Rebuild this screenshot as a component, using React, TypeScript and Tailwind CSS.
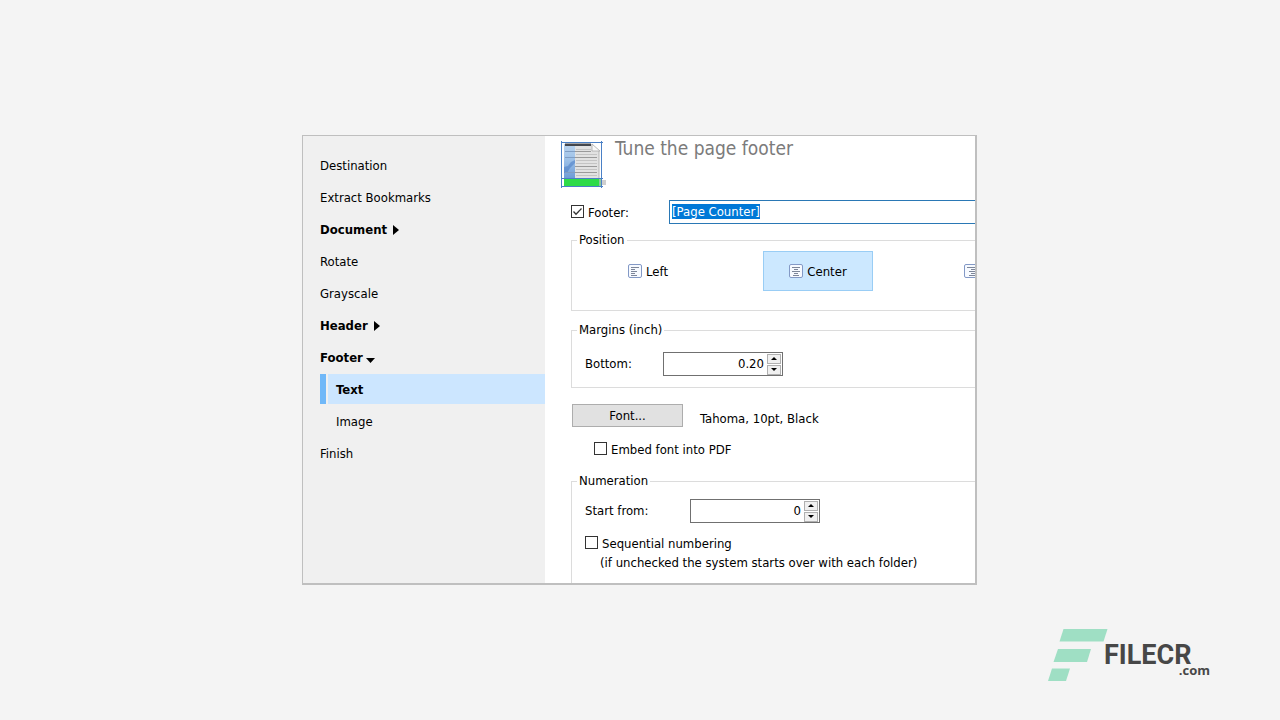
import { useEffect, useRef, useState } from "react";

type NavItem = {
  label: string;
  group?: "closed" | "open";
  child?: boolean;
  selected?: boolean;
};

const NAV: NavItem[] = [
  { label: "Destination" },
  { label: "Extract Bookmarks" },
  { label: "Document", group: "closed" },
  { label: "Rotate" },
  { label: "Grayscale" },
  { label: "Header", group: "closed" },
  { label: "Footer", group: "open" },
  { label: "Text", child: true, selected: true },
  { label: "Image", child: true },
  { label: "Finish" },
];

function GroupArrow({ open }: { open: boolean }) {
  return open ? (
    <svg className="mt-1 ml-[3px] h-[5px] w-[9px]" viewBox="0 0 9 5" aria-hidden="true">
      <path d="M0 0h9L4.5 5z" fill="#000" />
    </svg>
  ) : (
    <svg className="ml-[6px] h-[10px] w-[6px]" viewBox="0 0 6 10" aria-hidden="true">
      <path d="M0 0v10l6-5z" fill="#000" />
    </svg>
  );
}

function NavRow({ item }: { item: NavItem }) {
  const weight = item.group || item.selected ? "font-bold" : "font-normal";
  return (
    <li className="flex h-[30px]">
      {item.selected && <span className="mr-[2px] w-[6px] shrink-0 bg-[#70b8f8]" />}
      <a
        href="#"
        aria-current={item.selected ? "page" : undefined}
        className={`flex flex-1 items-center pt-[2px] ${weight} ${
          item.selected ? "bg-[#cce6ff] pl-2" : item.child ? "pl-4" : ""
        }`}
      >
        {item.label}
        {item.group && <GroupArrow open={item.group === "open"} />}
      </a>
    </li>
  );
}

function PageIcon() {
  return (
    <svg className="mt-1 h-12 w-12 shrink-0" viewBox="0 0 48 48" aria-hidden="true">
      <defs>
        <linearGradient id="page-blue" x1="0" y1="0" x2="0" y2="1">
          <stop offset="0" stopColor="#b9d3ee" />
          <stop offset=".45" stopColor="#9dc1e8" />
          <stop offset="1" stopColor="#6c9ad6" />
        </linearGradient>
      </defs>
      <path d="M3 3h28l7 7v28H3z" fill="#e2e2e2" />
      <path d="M3 3h11v35H3z" fill="url(#page-blue)" />
      <path d="M3 26l4-1 3-4 4-2v3l-5 5-3 5H3z" fill="#4a7cc4" opacity=".55" />
      <path d="M38 10v28" stroke="#b4b4b4" />
      <path d="M31 3v7h8z" fill="#fafafa" stroke="#a8a8a8" strokeWidth=".8" />
      <path
        d="M15 8.500h15M15 13.500h21M15 19.500h21M15 22.500h21M15 28.500h21M15 34.500h21"
        stroke="#c4c4c4"
      />
      <path d="M14 10.500h16M14 16.500h22M14 25.500h22M14 31.500h22" stroke="#9a9a9a" />
      <path d="M4 10.500h10M4 16.500h10M4 31.500h10" stroke="#7f9dc4" />
      <path d="M4 2.500h26v2.500H4z" fill="#44474d" />
      <path d="M41 39h4v5h-4z" fill="#cfcfcf" />
      <path d="M3 38h35v7H3z" fill="#2edb48" />
      <path d="M38 38h2v7h-2z" fill="#8fc79b" />
      <path d="M.500 0v47M40.500 0v47M0 1.500h42M0 37.500h42M0 45.500h42" stroke="#4a80c6" fill="none" />
    </svg>
  );
}

type Align = "left" | "center" | "right";

const ALIGN_LINES: Record<Align, string> = {
  left: "M3 3.500h8M3 5.500h4M3 7.500h6M3 9.500h4M3 11.500h6",
  center: "M3 3.500h8M5 5.500h4M3 7.500h8M5 9.500h4M4 11.500h6",
  right: "M3 3.500h8M7 5.500h4M5 7.500h6M7 9.500h4M5 11.500h6",
};

function AlignIcon({ align }: { align: Align }) {
  return (
    <svg className="h-[14px] w-[14px] shrink-0" viewBox="0 0 14 14" aria-hidden="true">
      <rect x=".5" y=".5" width="13" height="13" rx="1.500" fill="#f7faff" stroke="#8399c6" />
      <path d={ALIGN_LINES[align]} stroke="#7d8699" />
    </svg>
  );
}

function CheckBox({
  id,
  label,
  defaultChecked,
}: {
  id: string;
  label: string;
  defaultChecked?: boolean;
}) {
  return (
    <div className="flex h-4 items-start gap-1 pt-px">
      <span className="grid h-[13px] w-[13px] shrink-0">
        <input
          id={id}
          type="checkbox"
          defaultChecked={defaultChecked}
          className="peer col-start-1 row-start-1 h-[13px] w-[13px] appearance-none border border-[#333] bg-white"
        />
        <svg
          className="pointer-events-none invisible col-start-1 row-start-1 h-[13px] w-[13px] peer-checked:visible"
          viewBox="0 0 13 13"
          aria-hidden="true"
        >
          <path d="M2.500 6.500L5 9.200L10.500 3.500" fill="none" stroke="#333" strokeWidth="1.300" />
        </svg>
      </span>
      <label htmlFor={id}>{label}</label>
    </div>
  );
}

function Spinner({
  id,
  initial,
  step,
  digits,
  className,
}: {
  id: string;
  initial: number;
  step: number;
  digits: number;
  className: string;
}) {
  const [value, setValue] = useState(initial);
  const button =
    "flex h-[10px] w-[14px] items-center justify-center border border-[#b0b0b0] bg-[#f0f0f0]";
  return (
    <div className={`flex h-6 items-center border border-[#707070] bg-white pr-px ${className}`}>
      <input
        id={id}
        type="text"
        readOnly
        value={value.toFixed(digits)}
        className="h-4 min-w-0 flex-1 bg-transparent pr-[3px] text-right outline-none"
      />
      <div className="flex flex-col gap-px">
        <button type="button" aria-label="Increase" className={button} onClick={() => setValue(value + step)}>
          <svg className="h-[3px] w-[6px]" viewBox="0 0 6 3" aria-hidden="true">
            <path d="M0 3h6L3 0z" fill="#000" />
          </svg>
        </button>
        <button
          type="button"
          aria-label="Decrease"
          className={button}
          onClick={() => setValue(Math.max(0, value - step))}
        >
          <svg className="h-[3px] w-[6px]" viewBox="0 0 6 3" aria-hidden="true">
            <path d="M0 0h6L3 3z" fill="#000" />
          </svg>
        </button>
      </div>
    </div>
  );
}

function AlignButton({
  align,
  label,
  active,
  onSelect,
}: {
  align: Align;
  label: string;
  active: boolean;
  onSelect: () => void;
}) {
  return (
    <button
      type="button"
      aria-pressed={active}
      onClick={onSelect}
      className={`flex h-10 w-[110px] shrink-0 items-center justify-center gap-1 border ${
        active ? "border-[#99cdf5] bg-[#cce8ff]" : "border-transparent"
      }`}
    >
      <AlignIcon align={align} />
      <span className="pt-px">{label}</span>
    </button>
  );
}

function FooterPanel() {
  const [align, setAlign] = useState<Align>("center");
  const textRef = useRef<HTMLInputElement>(null);

  useEffect(() => {
    textRef.current?.focus({ preventScroll: true });
    textRef.current?.select();
  }, []);

  const group = "border border-[#dcdcdc] pl-[13px]";
  const legend = "-ml-2 px-[2px]";

  return (
    <section className="min-w-0 flex-1 overflow-clip bg-white">
      <div className="min-w-[530px] pt-px pl-[26px]">
        <header className="-ml-[10px] flex gap-[6px]">
          <PageIcon />
          <h1 className="text-[19px] leading-[22px] text-[#7b7b7b]">Tune the page footer</h1>
        </header>

        <div className="mt-[11px] flex h-6 items-center">
          <div className="w-[98px]">
            <CheckBox id="footer-on" label="Footer:" defaultChecked />
          </div>
          <input
            ref={textRef}
            type="text"
            aria-label="Footer text"
            defaultValue="[Page Counter]"
            className="h-6 min-w-0 flex-1 border border-[#2a78b5] bg-white px-[2px] pb-px outline-none selection:bg-[#0078d7] selection:text-white"
          />
        </div>

        <fieldset className={`mt-2 pt-[3px] pb-[19px] ${group}`}>
          <legend className={legend}>Position</legend>
          <div className="ml-2 flex gap-[60px]">
            <AlignButton align="left" label="Left" active={align === "left"} onSelect={() => setAlign("left")} />
            <AlignButton
              align="center"
              label="Center"
              active={align === "center"}
              onSelect={() => setAlign("center")}
            />
            <AlignButton
              align="right"
              label="Right"
              active={align === "right"}
              onSelect={() => setAlign("right")}
            />
          </div>
        </fieldset>

        <fieldset className={`mt-[11px] pt-[14px] pb-[11px] ${group}`}>
          <legend className={legend}>Margins (inch)</legend>
          <div className="flex items-center">
            <label htmlFor="margin-bottom" className="w-[78px]">
              Bottom:
            </label>
            <Spinner id="margin-bottom" initial={0.2} step={0.05} digits={2} className="w-[120px]" />
          </div>
        </fieldset>

        <div className="mt-4 ml-px flex items-end gap-[17px]">
          <button type="button" className="h-[23px] w-[111px] border border-[#adadad] bg-[#e1e1e1]">
            Font...
          </button>
          <span>Tahoma, 10pt, Black</span>
        </div>

        <div className="mt-[14px] ml-[23px]">
          <CheckBox id="embed-font" label="Embed font into PDF" />
        </div>

        <fieldset className={`mt-4 border-b-0 pt-[10px] pb-3 ${group}`}>
          <legend className={legend}>Numeration</legend>
          <div className="flex items-center">
            <label htmlFor="start-from" className="w-[105px]">
              Start from:
            </label>
            <Spinner id="start-from" initial={0} step={1} digits={0} className="w-[130px]" />
          </div>
          <div className="mt-3">
            <CheckBox id="sequential" label="Sequential numbering" />
          </div>
          <p className="mt-1 ml-[15px]">(if unchecked the system starts over with each folder)</p>
        </fieldset>
      </div>
    </section>
  );
}

function Logo() {
  return (
    <div className="flex w-[162px]">
      <svg className="h-[52px] w-[60px] shrink-0" viewBox="0 0 60 52" aria-hidden="true">
        <path d="M15.500 0H59.500L55.500 12.500H11.500z" fill="#9fdfc4" />
        <path d="M10 20h33l-4 13H5.500z" fill="#9fdfc4" />
        <path d="M4 39.500h18L18 52H0z" fill="#9fdfc4" />
      </svg>
      <div className="-ml-1 flex flex-1 flex-col pt-[15px] font-['Roboto',sans-serif] font-bold text-[#474747]">
        <span className="text-[27px] leading-[22px]">FILECR</span>
        <span className="-mt-[2px] self-end font-['Open_Sans',sans-serif] text-[13px] leading-[13px]">.com</span>
      </div>
    </div>
  );
}

export default function App() {
  return (
    <div className="grid min-h-screen grid-cols-1 grid-rows-[1fr_auto_1fr] bg-[#f4f4f4] pr-px">
      <main className="row-start-2 mx-auto flex w-full max-w-[675px] border border-r-2 border-b-2 border-[#bfbfbf] font-['DejaVu_Sans_Condensed','Noto_Sans',sans-serif] text-[13px] leading-4 text-black">
        <nav className="w-[242px] shrink-0 bg-[#f0f0f0] pt-[14px] pl-[17px]">
          <ul className="flex flex-col gap-[2px]">
            {NAV.map((item) => (
              <NavRow key={item.label} item={item} />
            ))}
          </ul>
        </nav>
        <FooterPanel />
      </main>
      <div className="row-start-3 self-end justify-self-end pr-[69px] pb-[39px]">
        <Logo />
      </div>
    </div>
  );
}
